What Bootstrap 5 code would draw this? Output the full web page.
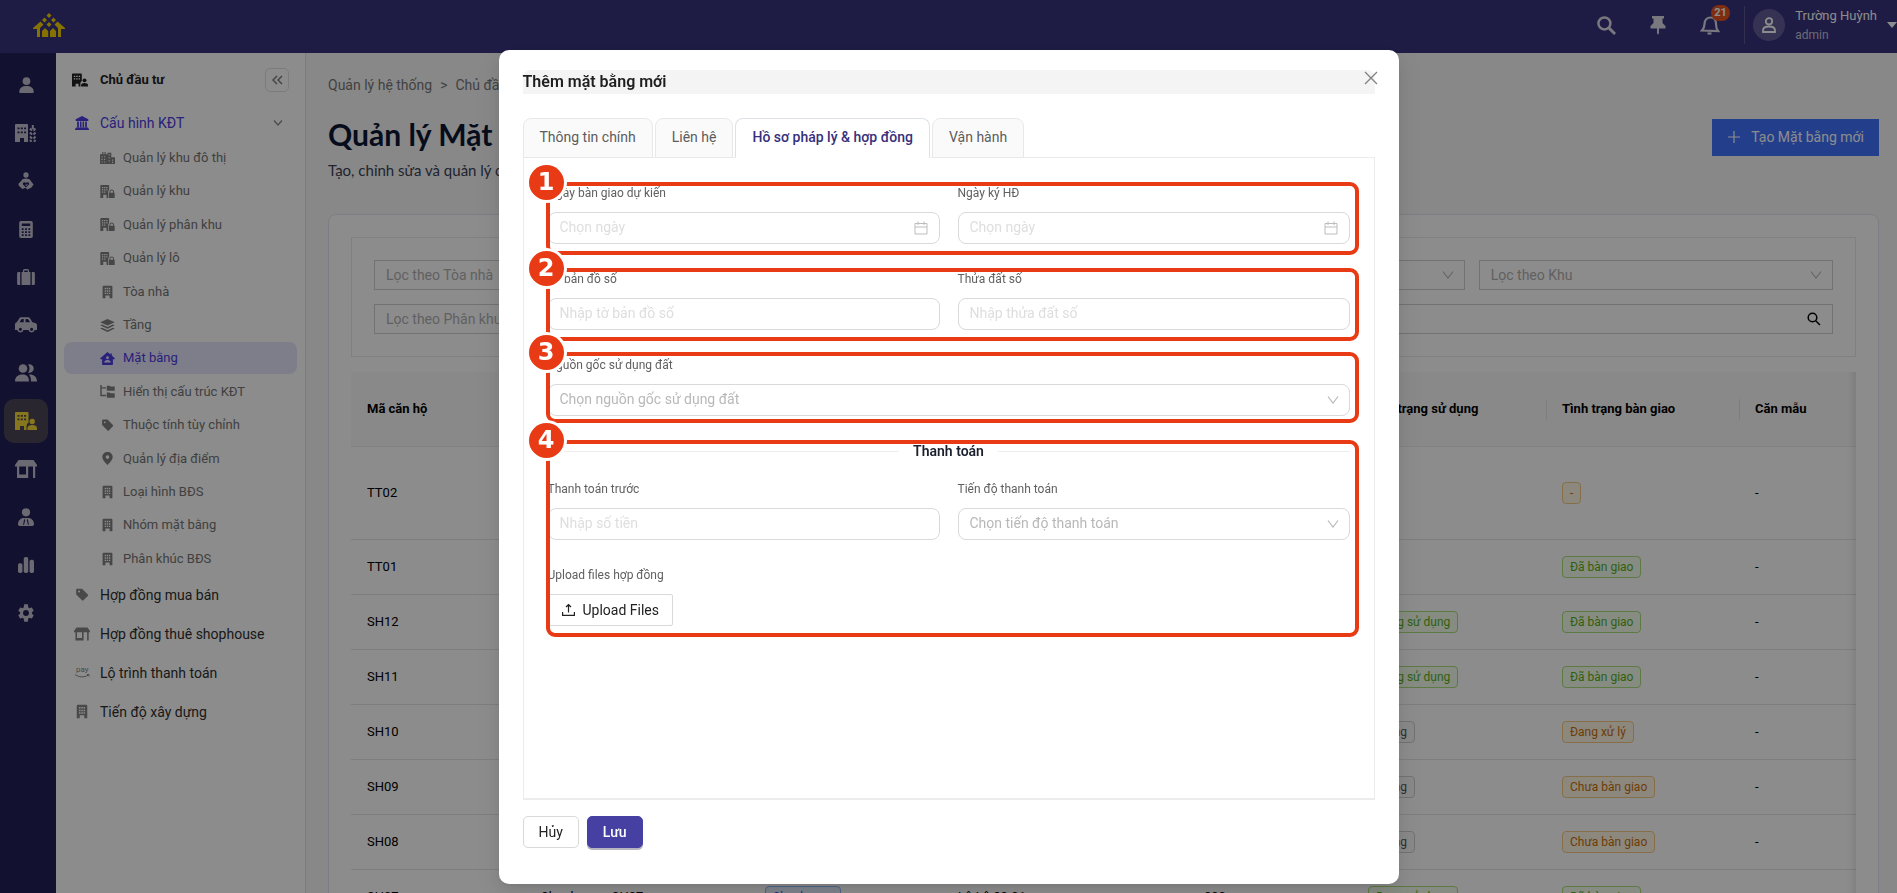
<!DOCTYPE html>
<html lang="vi">
<head>
<meta charset="utf-8">
<meta name="viewport" content="width=device-width, initial-scale=1">
<title>Quản lý Mặt bằng</title>
<link href="https://cdn.jsdelivr.net/npm/bootstrap@5.3.0/dist/css/bootstrap.min.css" rel="stylesheet">
<style>
  body { font-family: Roboto, "Liberation Sans", sans-serif; font-size: 14px; line-height: 22px; background: #f8f8f8; color: #000; overflow: hidden; }
  svg { fill: currentColor; flex: none; display: block; }
  .ico-line { fill: none; stroke: currentColor; }
  a { text-decoration: none; color: inherit; }

  .topbar { height: 53px; background: #37327d; color: #fff; padding: 0 0 3px 32px; }
  .topbar button, .plain-btn { background: none; border: 0; padding: 0; color: inherit; }
  .brand { color: #f5cf00; }
  .topbar .tools { gap: 26px; color: #dcdbe8; }
  .count { top: -6px; left: 15px; background: #e5531f; color: #fff; font-size: 11px; line-height: 16px; padding: 0 3px; border-radius: 8px; font-weight: 700; }
  .user { border-left: 1px solid #5d568f; height: 38px; padding-left: 8px; margin-left: 20px; gap: 10px; }
  .avatar-dot { width: 32px; height: 32px; background: #615c99; border-radius: 50%; }
  .user-name { font-size: 13px; line-height: 20px; }
  .user-role { font-size: 12px; line-height: 18px; color: #c4c2d8; }

  .rail { width: 56px; background: #231f58; color: #c3c2d0; padding: 10px 8px 0 4px; gap: 4px; }
  .rail a { height: 44px; border-radius: 10px; }
  .rail a.on { background: #4b4658; color: #f5d93a; }

  .sidemenu { width: 250px; background: #fff; border-right: 1px solid #e4e4e4; padding: 14px 8px 0; }
  .side-head { height: 26px; padding: 0 8px; font-size: 13px; font-weight: 700; color: #222; gap: 12px; }
  .fold { width: 24px; height: 24px; border: 1px solid #e0e0e0 !important; border-radius: 5px; color: #777 !important; }
  .side-row { height: 39px; padding: 0 14px 0 10px; color: #2f2f2f; }
  .side-row svg:first-child { color: #868686; margin-right: 10px; }
  .side-row.open { color: #4b3ce0; margin-top: 10px; }
  .side-row.open svg:first-child { color: #4b3ce0; }
  .side-row .twist { color: #8c8c8c; }
  .subs { height: 433px; margin: 0; }
  .subs a { height: 32px; padding-left: 36px; font-size: 13px; color: #757575; border-radius: 8px; gap: 8px; }
  .subs svg { color: #808080; }
  .subs a.on { background: #e6e4fb; color: #4b3ce0; }
  .subs a.on svg { color: #4b3ce0; }

  .page { padding: 21px 18px 0 22px; min-width: 0; }
  .crumbs { color: #777; gap: 8px; }
  .title-row { margin-top: 18px; }
  .page-title { font-family: Lato, "Open Sans", sans-serif; font-size: 30px; line-height: 40px; font-weight: 700; color: #0b1733; margin: 0 0 6px; }
  .page-sub { font-family: Lato, "Open Sans", sans-serif; font-size: 15px; line-height: 20px; color: #3a4257; }
  .btn-new { background: #4073ff; color: #fff; border: 0; border-radius: 0; height: 37px; padding: 0 15px; gap: 10px; font-size: 14px; }
  .panel-card { background: #fff; border: 1px solid #e3e5f2; border-radius: 8px; padding: 22px; margin-top: 34px; height: 800px; }
  .filters { border: 1px solid #eaeaea; padding: 22px; }
  .filter-grid { display: grid; grid-template-columns: repeat(4, 1fr); gap: 14px; }
  .filter-grid .wide { grid-column: span 3; }
  .flt { height: 30px; border: 1px solid #d0d0d0; border-radius: 0; font-size: 14px; line-height: 20px; padding: 0 11px; width: 100%; background-color: #fff; color: #b0b0b0; appearance: none; }
  select.flt, select.field { background-image: url("data:image/svg+xml,%3Csvg xmlns='http://www.w3.org/2000/svg' viewBox='0 0 12 12'%3E%3Cpath d='M1 2.500l5 6.500 5-6.500' fill='none' stroke='%23b5b5b5' stroke-width='1.100'/%3E%3C/svg%3E"); background-repeat: no-repeat; background-position: right 10px center; background-size: 12px 12px; }
  .flt::placeholder { color: #b0b0b0; }
  .over-right { top: 0; bottom: 0; right: 12px; margin: auto 0; }
  .cal { color: #bdbdbd; }

  .table-clip { margin-top: 15px; overflow: hidden; }
  .table-clip::after { content: ""; position: absolute; top: 0; bottom: 0; right: 0; width: 10px; box-shadow: inset -10px 0 8px -8px rgba(5,5,5,.12); }
  .grid-table { table-layout: fixed; width: 1640px; font-size: 13px; border-collapse: collapse; }
  .grid-table th { height: 74px; background: #fafafa; font-weight: 700; padding: 0 16px; border-bottom: 1px solid #ececec; position: relative; }
  .grid-table th + th::before { content: ""; position: absolute; left: 0; top: 27px; height: 21px; width: 1px; background: #e6e6e6; }
  .grid-table td { height: 55px; padding: 0 16px; border-bottom: 1px solid #e6e6e6; }
  .grid-table tr.tall td { height: 93px; }
  .chip { display: inline-block; font-size: 12px; line-height: 20px; padding: 0 7px; border: 1px solid; border-radius: 4px; }
  .chip-green { color: #57b01a; background: #f6ffed; border-color: #a9dd7c; }
  .chip-gold { color: #c96f0a; background: #fff7e6; border-color: #f5c883; }
  .chip-gray { color: #555; background: #fafafa; border-color: #d0d0d0; }
  .chip-blue { color: #2f54eb; background: #e6f0ff; border-color: #8cb8f0; }

  .modal-backdrop.show { opacity: .45; }
  .modal-dialog.wide-dialog { max-width: 900px; margin: 50px auto 0; }
  .sheet { border: 0; border-radius: 10px; min-height: calc(100vh - 59px); padding: 20px 24px 36px; box-shadow: 0 6px 16px rgba(0,0,0,.08), 0 3px 6px -4px rgba(0,0,0,.12), 0 9px 28px 8px rgba(0,0,0,.05); }
  .sheet-title { background: #f4f4f4; border-radius: 8px 8px 0 0; font-size: 16px; line-height: 24px; font-weight: 600; color: #1f1f1f; margin: 0 0 24px; }
  .sheet-close { top: 17px; right: 17px; width: 22px; height: 22px; color: #808080; }
  .sheet-tabs { border: 0; gap: 2px; }
  .sheet-tabs .nav-link { background: #fafafa; border: 1px solid #e8e8e8; border-radius: 8px 8px 0 0; padding: 7px 16px 9px; line-height: 22px; color: #5c5c5c; margin: 0; position: relative; }
  .sheet-tabs .nav-link.active { background: #fff; color: #372f7c; font-weight: 500; border-bottom-color: #fff; z-index: 1; }
  .sheet-body { border: 1px solid #ececec; border-bottom-width: 2px; margin-top: -1px; padding: 24px; }
  .twin { display: grid; grid-template-columns: 1fr 1fr; column-gap: 18px; }
  .grp { position: relative; margin-bottom: 24px; }
  .grp label, .lbl { display: block; font-size: 12px; line-height: 22px; color: #606060; margin-bottom: 8px; }
  .field { display: block; width: 100%; height: 32px; border: 1px solid #d9d9d9; border-radius: 8px; padding: 0 11px 2px; font-size: 14px; color: #b8b8b8; background-color: #fff; appearance: none; }
  .field::placeholder { color: #dedede; opacity: 1; }
  .split-title { gap: 14px; font-weight: 600; line-height: 22px; color: #1b1f2e; margin-bottom: 16px; }
  .split-title::before, .split-title::after { content: ""; flex: 1; height: 1px; background: #ededed; }
  .upload { height: 32px; border: 1px solid #d9d9d9; border-radius: 2px; background: #fff; padding: 0 13px 1px; gap: 8px; color: #222; }
  .foot { gap: 8px; margin-top: 16px; }
  .foot button { height: 32px; padding: 0 15px 1px; border-radius: 5px; font-size: 14px; }
  .btn-cancel { background: #fff; border: 1px solid #d9d9d9; color: #222; }
  .foot .btn-save { background: #4640a3; border: 1px solid #4640a3; color: #fff; font-weight: 500; box-shadow: 0 2px 0 #b5b3c0; }

  /* numbered guide frames that lie over the form sections */
  .frame { position: absolute; pointer-events: none; z-index: 2; top: 0; right: -9px; bottom: -11px; left: -2px; border: 4px solid #e83a14; border-radius: 9px; }
  .frame b { position: absolute; left: -21px; top: -21px; width: 35px; height: 35px; border-radius: 50%; background: #e83a14; color: #fff; box-shadow: 0 0 0 3px #fff; font: 700 24px/35px "DejaVu Sans", sans-serif; text-align: center; }
  .frame.short { top: -2px; bottom: -7px; }
</style>
</head>
<body>
<svg width="0" height="0" class="position-absolute" aria-hidden="true">
  <defs>
    <symbol id="i-user" viewBox="0 0 20 20"><circle cx="10" cy="5.500" r="4.500"/><path d="M1.500 18.500c0-5 3.500-7.200 8.500-7.200s8.500 2.200 8.500 7.200c0 .6-.4 1-1 1h-15c-.6 0-1-.4-1-1z"/></symbol>
    <symbol id="i-bldg" viewBox="0 0 20 20"><path fill-rule="evenodd" d="M4.500 1h11A1.500 1.500 0 0 1 17 2.500V19h-4v-4H7v4H3V2.500A1.500 1.500 0 0 1 4.500 1zM6 4v2h2V4zm3 0v2h2V4zm3 0v2h2V4zM6 7.500v2h2v-2zm3 0v2h2v-2zm3 0v2h2v-2zM6 11v2h2v-2zm3 0v2h2v-2zm3 0v2h2v-2z"/></symbol>
    <symbol id="i-bldguser" viewBox="0 0 22 18"><path fill-rule="evenodd" d="M1 0h11.500a1 1 0 0 1 1 1v9.500c-1.300.8-2 2.500-2 4.500v3H9v-4H5v4H0V1a1 1 0 0 1 1-1zM2.500 3v1.800h2V3zm3.300 0v1.800h2V3zm3.300 0v1.800h2V3zM2.500 6.500v1.800h2V6.500zm3.300 0v1.800h2V6.500zm3.300 0v1.800h2V6.500z"/><circle cx="17.200" cy="9.500" r="2.700"/><path d="M12.500 18v-2c0-2 2-3 4.700-3s4.800 1 4.800 3v2z"/></symbol>
    <symbol id="i-bldglock" viewBox="0 0 22 20"><path fill-rule="evenodd" d="M1 0h11.500a1 1 0 0 1 1 1v6.500L12 10v10H9.500v-5h-5v5H0V1a1 1 0 0 1 1-1zM2.500 3v2h2V3zm3.300 0v2h2V3zm3.300 0v2h2V3zM2.500 6.500v2h2v-2zm3.300 0v2h2v-2zm3.300 0v2h2v-2zM2.500 10v2h2v-2zm3.300 0v2h2v-2z"/><path fill-rule="evenodd" d="M14 12v-1.500a3.500 3.500 0 0 1 7 0V12h1v8h-9v-8zm1.500 0h4v-1.500a2 2 0 0 0-4 0z"/></symbol>
    <symbol id="i-bldgwheat" viewBox="0 0 22 18"><path fill-rule="evenodd" d="M1 0h11a1 1 0 0 1 1 1v17H9v-4H5v4H0V1a1 1 0 0 1 1-1zM2.500 3.500v1.800h2V3.500zm3.300 0v1.800h2V3.500zm3.300 0v1.800h2V3.500zM2.500 7.500v1.800h2V7.500zm3.300 0v1.800h2V7.500zm3.300 0v1.800h2V7.500z"/><path d="M17.800 1v4M15 4.500l2 2.200M20.500 4.500l-2 2.200M15 8.500l2 2.200M20.500 8.500l-2 2.200M15 12.500l2 2.200M20.500 12.500l-2 2.200M15 16l1.500 1.800M20.500 16L19 17.800" fill="none" stroke="currentColor" stroke-width="2"/></symbol>
    <symbol id="i-city" viewBox="0 0 20 16"><path fill-rule="evenodd" d="M0 3h3V0h1.500v3H6V0h1.500v3H10V1h5v6h5v9H0zm2 2.500V7h1.500V5.500zm3.500 0V7H7V5.500zM2 9v1.500h1.500V9zm3.500 0v1.500H7V9zM2 12.500V14h1.500v-1.500zm3.500 0V14H7v-1.500zM11.500 3v1.800H13V3zm0 4v1.800H13V7zm0 4v1.800H13V11zm4.500-1v1.500h1.500V10zm0 3v1.500h1.500V13z"/></symbol>
    <symbol id="i-hands" viewBox="0 0 20 22"><circle cx="10" cy="3.500" r="3.300"/><path fill-rule="evenodd" d="M10 8c3 0 5 .8 6 3l3.500 4.500-3 4-5 2-2-2-4 1.500L1 17l-.5-2.500L4 11c1-2.200 3-3 6-3zm0 5.500c-1.500-1.500-4-.8-4 1.500l4 4 4-4c0-2.300-2.500-3-4-1.500zM9 14l1 2 2-2-.5 3h-2z"/></symbol>
    <symbol id="i-calc" viewBox="0 0 16 20"><path fill-rule="evenodd" d="M2 0h12a2 2 0 0 1 2 2v16a2 2 0 0 1-2 2H2a2 2 0 0 1-2-2V2a2 2 0 0 1 2-2zm1 3v3h10V3zm0 5.500v2h2.200v-2zm3.900 0v2h2.200v-2zm3.900 0v2H13v-2zM3 12v2h2.200v-2zm3.900 0v2h2.200v-2zm3.900 0v2H13v-2zM3 15.500v2h2.200v-2zm3.900 0v2h2.200v-2zm3.900 0v2H13v-2z"/></symbol>
    <symbol id="i-case" viewBox="0 0 20 18"><path fill-rule="evenodd" d="M6.500 2a2 2 0 0 1 2-2h3a2 2 0 0 1 2 2v1.500H15V18H5V3.500h1.500zM8 3.500h4V1.800H8zM0 5a1.500 1.500 0 0 1 1.500-1.500H3.500V18h-2A1.500 1.500 0 0 1 0 16.500zM16.500 3.500h2A1.500 1.500 0 0 1 20 5v11.500a1.500 1.500 0 0 1-1.500 1.500h-2z"/></symbol>
    <symbol id="i-car" viewBox="0 0 24 18"><path fill-rule="evenodd" d="M7 0h7c1 0 2 .5 2.500 1.300L19 5.500l3 .8c1.200.3 2 1.300 2 2.500V14h-2.500a3.500 3.500 0 0 1-6.800 0H9.300a3.500 3.500 0 0 1-6.800 0H0V8c0-1.200.8-2.200 2-2.500L4.500 1.500C5 .5 6 0 7 0zm1 2c-.7 0-1.200.3-1.500.8L5 5.500h4.500V2zm3.500 0v3.500h5L14.800 2.700c-.3-.5-.8-.7-1.400-.7zM5.900 11.500a1.700 1.700 0 1 0 0 3.400 1.700 1.700 0 0 0 0-3.400zm12.200 0a1.700 1.700 0 1 0 0 3.400 1.700 1.700 0 0 0 0-3.400z"/></symbol>
    <symbol id="i-users" viewBox="0 0 22 18"><circle cx="8" cy="4.500" r="4.300"/><path d="M13 .6a4.200 4.200 0 1 1 0 7.800c2-2.400 2-5.400 0-7.800zM0 17.500C0 13 3 10.500 7.500 10.500S14 13 14 17.500zM14 10.500c4.500-.3 8 2 8 7h-6c0-3-.5-5.300-2-7z"/></symbol>
    <symbol id="i-shop" viewBox="0 0 22 18"><path d="M3.500 0h15L22 5v1.500H0V5z"/><path fill-rule="evenodd" d="M2 6h2.200v8.500H11V6h2.200v12H2zM18 6h2.200v12H18z"/></symbol>
    <symbol id="i-tie" viewBox="0 0 18 20"><circle cx="9" cy="4.700" r="4.600"/><path fill-rule="evenodd" d="M5 11h8c3 1 5 3.500 5 7 0 1-.5 2-1.500 2h-15C.5 20 0 19 0 18c0-3.500 2-6 5-7zm2 .8L5.800 19h.9L8 14zm4 0L10 14l1.300 5h.9z"/></symbol>
    <symbol id="i-bars" viewBox="0 0 18 18"><rect y="7" width="5" height="11" rx="2"/><rect x="6.500" width="5" height="18" rx="2"/><rect x="13" y="3" width="5" height="15" rx="2"/></symbol>
    <symbol id="i-gear" viewBox="1 1 22 22"><path d="M19.140 12.940c.04-.3.06-.61.06-.94s-.02-.64-.07-.94l2.030-1.580c.18-.14.23-.41.12-.61l-1.920-3.320c-.12-.22-.37-.29-.59-.22l-2.390.96c-.5-.38-1.030-.7-1.620-.94L14.400 1.810c-.04-.24-.24-.41-.48-.41h-3.840c-.24 0-.43.17-.47.41l-.36 3.540c-.59.24-1.130.57-1.620.94l-2.390-.96c-.22-.08-.47 0-.59.22L2.740 8.870c-.12.21-.08.47.12.61l2.030 1.580c-.05.3-.09.63-.09.94s.02.64.07.94l-2.030 1.580c-.18.14-.23.41-.12.61l1.920 3.320c.12.22.37.29.59.22l2.390-.96c.5.38 1.030.7 1.620.94l.36 3.540c.05.24.24.41.48.41h3.840c.24 0 .44-.17.47-.41l.36-3.540c.59-.24 1.130-.56 1.620-.94l2.390.96c.22.08.47 0 .59-.22l1.920-3.320c.12-.22.07-.47-.12-.61zM12 15.600A3.600 3.600 0 1 1 12 8.400a3.600 3.600 0 0 1 0 7.200z" fill-rule="evenodd"/></symbol>
    <symbol id="i-bank" viewBox="0 0 20 20"><path d="M10 0l9 4.500V7H1V4.500zM3 8h2.500v8H3zM7 8h2.300v8H7zM10.800 8H13v8h-2.200zM14.500 8H17v8h-2.500zM1.500 16.500h17V18H20v2H0v-2h1.500z"/></symbol>
    <symbol id="i-layers" viewBox="0 0 20 18"><path d="M10 0l10 4.500L10 9 0 4.500zM2.500 7.500L10 11l7.500-3.500L20 8.800l-10 4.700L0 8.800zM2.500 12L10 15.500l7.500-3.500 2.500 1.200L10 18 0 13.200z"/></symbol>
    <symbol id="i-home" viewBox="0 0 20 18"><path fill-rule="evenodd" d="M10 0l4 3.300V2h2v3l4 3.500V10h-2.500v7a1 1 0 0 1-1 1h-13a1 1 0 0 1-1-1v-7H0V8.500zm0 6a2 2 0 1 0 0 4 2 2 0 0 0 0-4zm-4.500 8.500h9c0-2-1.500-3.500-4.500-3.500s-4.500 1.500-4.500 3.500z"/></symbol>
    <symbol id="i-tree" viewBox="0 0 20 18"><path d="M0 0h2v3h6v2H2v8.500h6v2H0zM9 1h4l1 1h6v6H9zM9 10.500h4l1 1h6v6H9z"/></symbol>
    <symbol id="i-tag" viewBox="0 0 20 20"><path fill-rule="evenodd" d="M3 1h7l9 9c.7.7.7 1.500 0 2.200L12.200 19c-.7.7-1.500.7-2.200 0L1 10V3c0-1.200.8-2 2-2zm2.500 3a1.500 1.500 0 1 0 0 3 1.500 1.500 0 0 0 0-3z"/></symbol>
    <symbol id="i-pinmap" viewBox="0 0 16 20"><path fill-rule="evenodd" d="M8 0c4.500 0 8 3.200 8 7.700C16 13 8 20 8 20S0 13 0 7.700C0 3.200 3.500 0 8 0zm0 5a2.800 2.800 0 1 0 0 5.600A2.800 2.800 0 0 0 8 5z"/></symbol>
    <symbol id="i-search" viewBox="0 0 20 20"><circle cx="7.800" cy="7.800" r="6.300" fill="none" stroke="currentColor" stroke-width="2.600"/><path d="M12.500 12.500L19 19" stroke="currentColor" stroke-width="3"/></symbol>
  </defs>
</svg>

<div class="vh-100 d-flex flex-column overflow-hidden">
  <header class="topbar d-flex align-items-center justify-content-between flex-shrink-0">
    <a href="#" class="brand" aria-label="Trang chủ">
      <svg width="34" height="26" viewBox="0 0 34 26"><path d="M17 1l2.500 2.500L17 6l-2.500-2.500zM12.500 5.500L15 8l-2.500 2.500L10 8zM21.500 5.500L24 8l-2.500 2.500L19 8zM17 10l2.500 2.500L17 15l-2.500-2.500z"/><path d="M8.500 9.500l3 3L8 16v9H5v-8H1v-1zM25.500 9.500l-3 3L26 16v9h3v-8h4v-1zM10 25v-6l3-3 3.200 3v6zM18 25v-6l3-3 3 3v6z"/></svg>
    </a>
    <div class="d-flex align-items-center">
      <div class="tools d-flex align-items-center">
        <button type="button" class="p-1" aria-label="Tìm kiếm"><svg width="19" height="19"><use href="#i-search"/></svg></button>
        <button type="button" class="p-1" aria-label="Ghim"><svg width="16" height="19" viewBox="0 0 16 19"><path d="M2 0h12v2.500h-1.500V7l3 3v2.500H9V17l-1 2-1-2v-4.500H.5V10l3-3V2.500H2z"/></svg></button>
        <button type="button" class="p-1 position-relative" aria-label="Thông báo">
          <svg width="20" height="20" viewBox="0 0 20 20" class="ico-line" stroke-width="2.200"><path d="M2 15.500c1.700-1.500 2.300-3.500 2.500-6.500C4.800 5 7 2.500 10.500 2.500S16 5 16 9c0 3 .6 5.200 2 7z"/><path d="M7.500 18.500h4"/></svg>
          <span class="count position-absolute">21</span>
        </button>
      </div>
      <div class="user d-flex align-items-center">
        <span class="avatar-dot d-flex align-items-center justify-content-center"><svg width="14" height="16" viewBox="0 0 14 16" class="ico-line" stroke-width="1.800"><circle cx="7" cy="4.300" r="3.200"/><path d="M1 13.500c0-2.500 2-4 6-4s6 1.500 6 4V15H1z"/></svg></span>
        <div><div class="user-name">Trường Huỳnh</div><div class="user-role">admin</div></div>
        <button type="button" aria-label="Mở menu tài khoản"><svg width="10" height="6" viewBox="0 0 10 6"><path d="M0 0h10L5 6z"/></svg></button>
      </div>
    </div>
  </header>

  <div class="d-flex flex-grow-1 overflow-hidden">
    <nav class="rail d-flex flex-column flex-shrink-0" aria-label="Phân hệ">
      <a href="#" class="d-flex align-items-center justify-content-center" aria-label="Cư dân"><svg width="17" height="18"><use href="#i-user"/></svg></a>
      <a href="#" class="d-flex align-items-center justify-content-center" aria-label="Dự án"><svg width="22" height="18"><use href="#i-bldgwheat"/></svg></a>
      <a href="#" class="d-flex align-items-center justify-content-center" aria-label="Chăm sóc"><svg width="16" height="18"><use href="#i-hands"/></svg></a>
      <a href="#" class="d-flex align-items-center justify-content-center" aria-label="Kế toán"><svg width="14" height="17"><use href="#i-calc"/></svg></a>
      <a href="#" class="d-flex align-items-center justify-content-center" aria-label="Công việc"><svg width="18" height="16"><use href="#i-case"/></svg></a>
      <a href="#" class="d-flex align-items-center justify-content-center" aria-label="Phương tiện"><svg width="22" height="17"><use href="#i-car"/></svg></a>
      <a href="#" class="d-flex align-items-center justify-content-center" aria-label="Khách hàng"><svg width="22" height="18"><use href="#i-users"/></svg></a>
      <a href="#" class="on d-flex align-items-center justify-content-center" aria-label="Chủ đầu tư"><svg width="22" height="18"><use href="#i-bldguser"/></svg></a>
      <a href="#" class="d-flex align-items-center justify-content-center" aria-label="Cửa hàng"><svg width="22" height="18"><use href="#i-shop"/></svg></a>
      <a href="#" class="d-flex align-items-center justify-content-center" aria-label="Nhân sự"><svg width="16" height="18"><use href="#i-tie"/></svg></a>
      <a href="#" class="d-flex align-items-center justify-content-center" aria-label="Báo cáo"><svg width="16" height="16"><use href="#i-bars"/></svg></a>
      <a href="#" class="d-flex align-items-center justify-content-center" aria-label="Cài đặt"><svg width="18" height="18"><use href="#i-gear"/></svg></a>
    </nav>

    <aside class="sidemenu flex-shrink-0">
      <div class="side-head d-flex align-items-center">
        <svg width="16" height="14"><use href="#i-bldguser"/></svg><span>Chủ đầu tư</span>
        <button type="button" class="fold plain-btn ms-auto d-flex align-items-center justify-content-center" aria-label="Thu gọn"><svg width="11" height="10" viewBox="0 0 11 10" class="ico-line" stroke-width="1.400"><path d="M5 1L1 5l4 4M10 1L6 5l4 4"/></svg></button>
      </div>
      <a href="#" class="side-row open d-flex align-items-center"><svg width="16" height="14"><use href="#i-bank"/></svg>Cấu hình KĐT<svg class="twist ms-auto ico-line" width="10" height="6" viewBox="0 0 10 6" stroke-width="1.300"><path d="M1 .5l4 4.500L9 .5"/></svg></a>
      <ul class="subs list-unstyled d-flex flex-column justify-content-between">
        <li><a href="#" class="d-flex align-items-center"><svg width="15" height="12"><use href="#i-city"/></svg>Quản lý khu đô thị</a></li>
        <li><a href="#" class="d-flex align-items-center"><svg width="15" height="13"><use href="#i-bldglock"/></svg>Quản lý khu</a></li>
        <li><a href="#" class="d-flex align-items-center"><svg width="15" height="13"><use href="#i-bldglock"/></svg>Quản lý phân khu</a></li>
        <li><a href="#" class="d-flex align-items-center"><svg width="15" height="13"><use href="#i-bldglock"/></svg>Quản lý lô</a></li>
        <li><a href="#" class="d-flex align-items-center"><svg width="15" height="14"><use href="#i-bldg"/></svg>Tòa nhà</a></li>
        <li><a href="#" class="d-flex align-items-center"><svg width="15" height="13"><use href="#i-layers"/></svg>Tầng</a></li>
        <li><a href="#" class="on d-flex align-items-center"><svg width="15" height="13"><use href="#i-home"/></svg>Mặt bằng</a></li>
        <li><a href="#" class="d-flex align-items-center"><svg width="15" height="13"><use href="#i-tree"/></svg>Hiển thị cấu trúc KĐT</a></li>
        <li><a href="#" class="d-flex align-items-center"><svg width="15" height="12"><use href="#i-tag"/></svg>Thuộc tính tùy chỉnh</a></li>
        <li><a href="#" class="d-flex align-items-center"><svg width="15" height="13"><use href="#i-pinmap"/></svg>Quản lý địa điểm</a></li>
        <li><a href="#" class="d-flex align-items-center"><svg width="15" height="14"><use href="#i-bldg"/></svg>Loại hình BĐS</a></li>
        <li><a href="#" class="d-flex align-items-center"><svg width="15" height="14"><use href="#i-bldg"/></svg>Nhóm mặt bằng</a></li>
        <li><a href="#" class="d-flex align-items-center"><svg width="15" height="14"><use href="#i-bldg"/></svg>Phân khúc BĐS</a></li>
      </ul>
      <a href="#" class="side-row d-flex align-items-center"><svg width="16" height="13"><use href="#i-tag"/></svg>Hợp đồng mua bán</a>
      <a href="#" class="side-row d-flex align-items-center"><svg width="16" height="14"><use href="#i-shop"/></svg>Hợp đồng thuê shophouse</a>
      <a href="#" class="side-row d-flex align-items-center"><svg width="16" height="14" viewBox="0 0 16 14"><text x="2" y="6" font-size="8">pay</text><path d="M1 8.500c4 3 9 3 13 .8M13 8.500h2v2" fill="none" stroke="currentColor"/></svg>Lộ trình thanh toán</a>
      <a href="#" class="side-row d-flex align-items-center"><svg width="16" height="15"><use href="#i-bldg"/></svg>Tiến độ xây dựng</a>
    </aside>

    <main class="page flex-grow-1">
      <nav class="crumbs d-flex" aria-label="Đường dẫn"><a href="#">Quản lý hệ thống</a><span>&gt;</span><a href="#">Chủ đầu tư</a></nav>
      <div class="title-row d-flex justify-content-between align-items-center">
        <h1 class="page-title">Quản lý Mặt bằng</h1>
        <button type="button" class="btn-new d-flex align-items-center"><svg width="14" height="14" viewBox="0 0 14 14" class="ico-line" stroke-width="1.200"><path d="M7 1v12M1 7h12"/></svg>Tạo Mặt bằng mới</button>
      </div>
      <div class="page-sub">Tạo, chỉnh sửa và quản lý các mặt bằng trong hệ thống</div>

      <section class="panel-card">
        <div class="filters">
          <div class="filter-grid">
            <select class="flt" aria-label="Tòa nhà"><option>Lọc theo Tòa nhà</option></select>
            <select class="flt" aria-label="Tầng"><option>Lọc theo Tầng</option></select>
            <select class="flt" aria-label="Lô"><option>Lọc theo Lô</option></select>
            <select class="flt" aria-label="Khu"><option>Lọc theo Khu</option></select>
            <select class="flt" aria-label="Phân khu"><option>Lọc theo Phân khu</option></select>
            <div class="wide position-relative"><input class="flt" type="text" aria-label="Tìm kiếm" placeholder="Tìm kiếm"><svg class="over-right position-absolute ico-line" width="14" height="14" viewBox="0 0 14 14" stroke-width="1.500"><circle cx="5.500" cy="5.500" r="4.300"/><path d="M8.700 8.700l4.300 4.300"/></svg></div>
          </div>
        </div>
        <div class="table-clip position-relative">
          <table class="grid-table">
            <colgroup><col width="174"><col width="224"><col width="193"><col width="246"><col width="164"><col width="194"><col width="193"><col></colgroup>
            <thead><tr><th>Mã căn hộ</th><th>Tên căn hộ</th><th>Loại hình</th><th>Lô</th><th>Diện tích</th><th>Tình trạng sử dụng</th><th>Tình trạng bàn giao</th><th>Căn mẫu</th></tr></thead>
            <tbody>
              <tr class="tall"><td>TT02</td><td>TT02</td><td>-</td><td>-</td><td>-</td><td>-</td><td><span class="chip chip-gold">-</span></td><td>-</td></tr>
              <tr><td>TT01</td><td>TT01</td><td>-</td><td>-</td><td>-</td><td>-</td><td><span class="chip chip-green">Đã bàn giao</span></td><td>-</td></tr>
              <tr><td>SH12</td><td>Shophouse_SH12</td><td><span class="chip chip-blue">Shophouse</span></td><td>Lô Lô 20.01</td><td>200</td><td><span class="chip chip-green">Đang sử dụng</span></td><td><span class="chip chip-green">Đã bàn giao</span></td><td>-</td></tr>
              <tr><td>SH11</td><td>Shophouse_SH11</td><td><span class="chip chip-blue">Shophouse</span></td><td>Lô Lô 20.01</td><td>200</td><td><span class="chip chip-green">Đang sử dụng</span></td><td><span class="chip chip-green">Đã bàn giao</span></td><td>-</td></tr>
              <tr><td>SH10</td><td>Shophouse_SH10</td><td><span class="chip chip-blue">Shophouse</span></td><td>Lô Lô 20.01</td><td>200</td><td><span class="chip chip-gray">Trống</span></td><td><span class="chip chip-gold">Đang xử lý</span></td><td>-</td></tr>
              <tr><td>SH09</td><td>Shophouse_SH09</td><td><span class="chip chip-blue">Shophouse</span></td><td>Lô Lô 20.01</td><td>200</td><td><span class="chip chip-gray">Trống</span></td><td><span class="chip chip-gold">Chưa bàn giao</span></td><td>-</td></tr>
              <tr><td>SH08</td><td>Shophouse_SH08</td><td><span class="chip chip-blue">Shophouse</span></td><td>Lô Lô 20.01</td><td>200</td><td><span class="chip chip-gray">Trống</span></td><td><span class="chip chip-gold">Chưa bàn giao</span></td><td>-</td></tr>
              <tr><td>SH07</td><td>Shophouse_SH07</td><td><span class="chip chip-blue">Shophouse</span></td><td>Lô Lô 20.01</td><td>200</td><td><span class="chip chip-green">Đang sử dụng</span></td><td><span class="chip chip-green">Đã bàn giao</span></td><td>-</td></tr>
            </tbody>
          </table>
        </div>
      </section>
    </main>
  </div>
</div>

<div class="modal-backdrop show"></div>
<div class="modal d-block" role="dialog" aria-modal="true" aria-labelledby="sheetTitle">
  <div class="modal-dialog wide-dialog">
    <form class="modal-content sheet">
      <h2 class="sheet-title" id="sheetTitle">Thêm mặt bằng mới</h2>
      <button type="button" class="sheet-close plain-btn position-absolute d-flex align-items-center justify-content-center" aria-label="Đóng"><svg width="14" height="14" viewBox="0 0 14 14" class="ico-line" stroke-width="1.300"><path d="M1 1l12 12M13 1L1 13"/></svg></button>
      <ul class="nav nav-tabs sheet-tabs">
        <li class="nav-item"><button type="button" class="nav-link">Thông tin chính</button></li>
        <li class="nav-item"><button type="button" class="nav-link">Liên hệ</button></li>
        <li class="nav-item"><button type="button" class="nav-link active">Hồ sơ pháp lý &amp; hợp đồng</button></li>
        <li class="nav-item"><button type="button" class="nav-link">Vận hành</button></li>
      </ul>
      <div class="sheet-body flex-grow-1">
        <div class="grp twin">
          <div><label for="f1">Ngày bàn giao dự kiến</label><div class="position-relative"><input id="f1" class="field" type="text" placeholder="Chọn ngày"><svg class="cal over-right position-absolute ico-line" width="14" height="14" viewBox="0 0 14 14"><path d="M1 2.500h12v10.500H1zM1 6h12M4 .5v3.500M10 .5v3.500"/></svg></div></div>
          <div><label for="f2">Ngày ký HĐ</label><div class="position-relative"><input id="f2" class="field" type="text" placeholder="Chọn ngày"><svg class="cal over-right position-absolute ico-line" width="14" height="14" viewBox="0 0 14 14"><path d="M1 2.500h12v10.500H1zM1 6h12M4 .5v3.500M10 .5v3.500"/></svg></div></div>
          <div class="frame"><b>1</b></div>
        </div>
        <div class="grp twin">
          <div><label for="f3">Tờ bản đồ số</label><input id="f3" class="field" type="text" placeholder="Nhập tờ bản đồ số"></div>
          <div><label for="f4">Thửa đất số</label><input id="f4" class="field" type="text" placeholder="Nhập thửa đất số"></div>
          <div class="frame"><b>2</b></div>
        </div>
        <div class="grp">
          <label for="f5">Nguồn gốc sử dụng đất</label><select id="f5" class="field"><option>Chọn nguồn gốc sử dụng đất</option></select>
          <div class="frame short"><b>3</b></div>
        </div>
        <div class="grp">
          <div class="split-title d-flex align-items-center">Thanh toán</div>
          <div class="twin mb-4">
            <div><label for="f6">Thanh toán trước</label><input id="f6" class="field" type="text" placeholder="Nhập số tiền"></div>
            <div><label for="f7">Tiến độ thanh toán</label><select id="f7" class="field"><option>Chọn tiến độ thanh toán</option></select></div>
          </div>
          <span class="lbl">Upload files hợp đồng</span>
          <button type="button" class="upload d-flex align-items-center"><svg width="13" height="13" viewBox="0 0 13 13" class="ico-line" stroke-width="1.200"><path d="M.6 9v3.400h11.800V9M6.500 9.500V2M4 4l2.500-2.500L9 4"/></svg>Upload Files</button>
          <div class="frame"><b>4</b></div>
        </div>
      </div>
      <div class="foot d-flex">
        <button type="button" class="btn-cancel">Hủy</button>
        <button type="submit" class="btn-save">Lưu</button>
      </div>
    </form>
  </div>
</div>
<script src="https://cdn.jsdelivr.net/npm/bootstrap@5.3.0/dist/js/bootstrap.bundle.min.js"></script>
</body>
</html>
